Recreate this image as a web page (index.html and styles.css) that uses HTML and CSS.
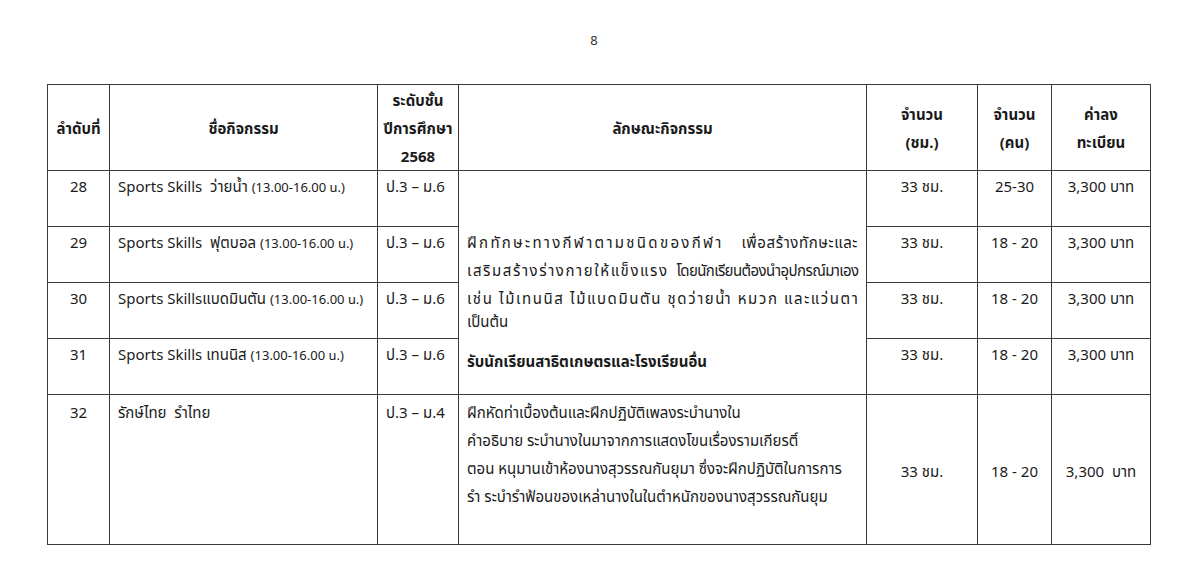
FILE: index.html
```html
<!DOCTYPE html>
<html lang="th">
<head>
<meta charset="utf-8">
<title>8</title>
<link rel="stylesheet" href="styles.css">
</head>
<body>
<div class="page">
  <div class="pageno">8</div>
  <table class="grid">
    <colgroup>
      <col class="c-no">
      <col class="c-name">
      <col class="c-level">
      <col class="c-desc">
      <col class="c-hours">
      <col class="c-people">
      <col class="c-fee">
    </colgroup>
    <thead>
      <tr class="r-head">
        <th>ลำดับที่</th>
        <th>ชื่อกิจกรรม</th>
        <th>ระดับชั้น<br>ปีการศึกษา<br>2568</th>
        <th>ลักษณะกิจกรรม</th>
        <th>จำนวน<br>(ชม.)</th>
        <th>จำนวน<br>(คน)</th>
        <th>ค่าลง<br>ทะเบียน</th>
      </tr>
    </thead>
    <tbody>
      <tr class="r-std">
        <td class="ctr">28</td>
        <td>Sports Skills&nbsp; ว่ายน้ำ <span class="sm">(13.00-16.00 น.)</span></td>
        <td>ป.3 – ม.6</td>
        <td rowspan="4" class="desc">
          <div class="jl"><span class="sp3">ฝึกทักษะทางกีฬาตามชนิดของกีฬา</span>&nbsp; <span class="sp1">เพื่อสร้างทักษะและ</span></div>
          <div class="jl"><span class="sp2">เสริมสร้างร่างกายให้แข็งแรง</span>&nbsp; <span class="spn">โดยนักเรียนต้องนำอุปกรณ์มาเอง</span></div>
          <div class="jl sp4">เช่น ไม้เทนนิส ไม้แบดมินตัน ชุดว่ายน้ำ หมวก และแว่นตา</div>
          <div class="tail">เป็นต้น</div>
          <div class="strong">รับนักเรียนสาธิตเกษตรและโรงเรียนอื่น</div>
        </td>
        <td class="ctr">33 ชม.</td>
        <td class="ctr">25-30</td>
        <td class="ctr">3,300 บาท</td>
      </tr>
      <tr class="r-std">
        <td class="ctr">29</td>
        <td>Sports Skills&nbsp; ฟุตบอล <span class="sm">(13.00-16.00 น.)</span></td>
        <td>ป.3 – ม.6</td>
        <td class="ctr">33 ชม.</td>
        <td class="ctr">18 - 20</td>
        <td class="ctr">3,300 บาท</td>
      </tr>
      <tr class="r-std">
        <td class="ctr">30</td>
        <td>Sports Skillsแบดมินตัน <span class="sm">(13.00-16.00 น.)</span></td>
        <td>ป.3 – ม.6</td>
        <td class="ctr">33 ชม.</td>
        <td class="ctr">18 - 20</td>
        <td class="ctr">3,300 บาท</td>
      </tr>
      <tr class="r-std">
        <td class="ctr">31</td>
        <td>Sports Skills เทนนิส <span class="sm">(13.00-16.00 น.)</span></td>
        <td>ป.3 – ม.6</td>
        <td class="ctr">33 ชม.</td>
        <td class="ctr">18 - 20</td>
        <td class="ctr">3,300 บาท</td>
      </tr>
      <tr class="r-last">
        <td class="ctr">32</td>
        <td>รักษ์ไทย&nbsp; รำไทย</td>
        <td>ป.3 – ม.4</td>
        <td class="desc2">
          <div>ฝึกหัดท่าเบื้องต้นและฝึกปฏิบัติเพลงระบำนางใน</div>
          <div>คำอธิบาย ระบำนางในมาจากการแสดงโขนเรื่องรามเกียรติ์</div>
          <div>ตอน หนุมานเข้าห้องนางสุวรรณกันยุมา ซึ่งจะฝึกปฏิบัติในการการ</div>
          <div>รำ ระบำรำฟ้อนของเหล่านางในในตำหนักของนางสุวรรณกันยุม</div>
        </td>
        <td class="ctr mid">33 ชม.</td>
        <td class="ctr mid">18 - 20</td>
        <td class="ctr mid">3,300&nbsp; บาท</td>
      </tr>
    </tbody>
  </table>
</div>
</body>
</html>
```

FILE: styles.css
```css
html, body {
  margin: 0;
  padding: 0;
  background: #ffffff;
}

body {
  font-family: "Noto Sans", "Noto Sans Thai", "Noto Sans CJK SC", sans-serif;
  color: #1a1a1a;
  font-size: 15px;
}

.page {
  padding: 30px 0 0 47px;
}

.pageno {
  width: 1102px;
  text-align: center;
  font-size: 13px;
  color: #333;
  line-height: 20px;
  margin-left: -4px;
  margin-bottom: 34px;
}

.grid {
  border-collapse: collapse;
  table-layout: fixed;
  width: 1103px;
}

.c-no { width: 62px; }
.c-name { width: 268px; }
.c-level { width: 81px; }
.c-desc { width: 408px; }
.c-hours { width: 111px; }
.c-people { width: 74px; }
.c-fee { width: 99px; }

.grid th,
.grid td {
  border: 1px solid #3a3a3a;
  padding: 0 8px;
  line-height: 28px;
  font-size: 15px;
  vertical-align: top;
  text-align: left;
}

.grid th {
  font-weight: 700;
  text-align: center;
  vertical-align: middle;
  white-space: nowrap;
  padding: 0 2px;
}

.r-head th { height: 85px; }

.r-std td { height: 51px; padding-top: 1px; padding-bottom: 3px; }

.r-last td { height: 146px; padding-top: 3px; }

.ctr { text-align: center !important; }

.mid { vertical-align: middle !important; }

.sm { font-size: 13px; }

.desc {
  vertical-align: middle !important;
  padding-top: 40px !important;
}

.jl {
  text-align: justify;
  text-align-last: justify;
  white-space: nowrap;
}

.sp3 { letter-spacing: 2.3px; }
.sp2 { letter-spacing: 1.6px; }
.sp1 { letter-spacing: 0.6px; }
.sp4 { letter-spacing: 1.6px; }
.spn { letter-spacing: -0.6px; }

.tail { line-height: 18px; }

.strong {
  font-weight: 700;
  margin-top: 17px;
}
```
